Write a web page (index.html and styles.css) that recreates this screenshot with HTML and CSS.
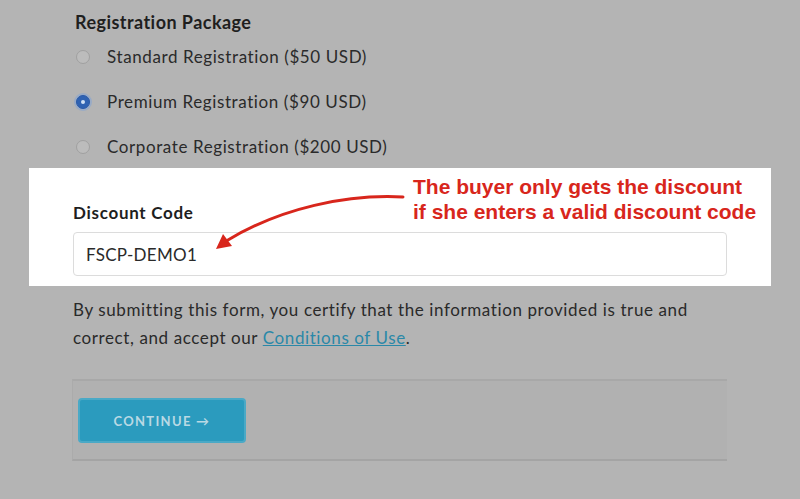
FILE: index.html
```html
<!DOCTYPE html>
<html lang="en">
<head>
<meta charset="utf-8">
<title>Registration</title>
<link rel="stylesheet" href="styles.css">
</head>
<body>
<form class="form">
  <h2 class="heading">Registration Package</h2>
  <div class="radios">
    <label class="radio-row"><span class="radio"></span><span class="radio-label">Standard Registration ($50 USD)</span></label>
    <label class="radio-row"><span class="radio checked"></span><span class="radio-label">Premium Registration ($90 USD)</span></label>
    <label class="radio-row"><span class="radio"></span><span class="radio-label">Corporate Registration ($200 USD)</span></label>
  </div>
  <div class="highlight">
    <div class="field-label">Discount Code</div>
    <div class="input">FSCP-DEMO1</div>
    <div class="note">The buyer only gets the discount<br>if she enters a valid discount code</div>
    <svg class="arrow" viewBox="0 0 742 118" width="742" height="118">
      <path d="M374 29 C 318 26 252 40 199 72" fill="none" stroke="#d8261c" stroke-width="3" stroke-linecap="round"/>
      <polygon points="187,81 203,78 194,66" fill="#d8261c"/>
    </svg>
  </div>
  <p class="terms">By submitting this form, you certify that the information provided is true and correct, and accept our <a class="link" href="#">Conditions of Use</a>.</p>
  <div class="actions">
    <button type="button" class="btn">CONTINUE &#8594;</button>
  </div>
</form>
</body>
</html>
```
FILE: styles.css
```css
html, body {
  margin: 0;
  padding: 0;
}
body {
  background: #b4b4b4;
  font-family: Lato, "Open Sans", sans-serif;
  color: #272727;
  width: 800px;
  height: 499px;
  overflow: hidden;
}
.form {
  padding-top: 12px;
}
.heading {
  margin: 0 0 0 75px;
  font-size: 18px;
  line-height: 20px;
  font-weight: 700;
  letter-spacing: 0.45px;
  color: #1f1f1f;
}
.radios {
  margin-top: 2px;
}
.radio-row {
  display: flex;
  align-items: center;
  height: 45px;
  padding-left: 76px;
  gap: 17px;
}
.radio {
  width: 14px;
  height: 14px;
  border-radius: 50%;
  border: 1px solid #a0a0a0;
  background: #bcbcbc;
  box-sizing: border-box;
  display: flex;
  align-items: center;
  justify-content: center;
}
.radio.checked {
  background: #2f62b2;
  border-color: #2a5aa8;
  box-shadow: 0 0 0 2px rgba(120, 160, 220, 0.45);
}
.radio.checked::after {
  content: "";
  width: 4px;
  height: 4px;
  border-radius: 50%;
  background: #cfe0f5;
}
.radio-label {
  font-size: 17px;
  letter-spacing: 0.6px;
  color: #2a2a2a;
}
.highlight {
  position: relative;
  margin: -1px 29px 0;
  background: #ffffff;
  padding: 35px 0 10px 44px;
}
.field-label {
  font-size: 17px;
  line-height: 20px;
  font-weight: 700;
  letter-spacing: 0.7px;
  color: #1e1e1e;
}
.input {
  margin-top: 9px;
  width: 654px;
  height: 44px;
  box-sizing: border-box;
  border: 1px solid #dcdcdc;
  border-radius: 4px;
  padding-left: 12px;
  display: flex;
  align-items: center;
  font-size: 17px;
  letter-spacing: 0.3px;
  color: #2a2a2a;
}
.note {
  position: absolute;
  left: 384px;
  top: 6px;
  font-family: "Liberation Sans", Arial, sans-serif;
  font-weight: 700;
  font-size: 21px;
  line-height: 25px;
  color: #d8261c;
  white-space: nowrap;
}
.arrow {
  position: absolute;
  left: 0;
  top: 0;
  pointer-events: none;
}
.terms {
  margin: 10px 0 0 73px;
  width: 660px;
  font-size: 17px;
  line-height: 28px;
  letter-spacing: 0.6px;
  color: #2a2a2a;
}
.link {
  color: #2a88a8;
  text-decoration: underline;
}
.actions {
  margin: 27px 0 0 72px;
  width: 655px;
  height: 82px;
  box-sizing: border-box;
  border-top: 2px solid #a8a8a8;
  border-bottom: 2px solid #a4a4a4;
  border-left: 1px solid #ababab;
  background: #b1b1b1;
  padding: 17px 0 0 5px;
}
.btn {
  width: 168px;
  height: 45px;
  border: 2px solid #4aa9c6;
  border-radius: 4px;
  background: #2b9bbe;
  color: #b9d9e4;
  font-family: Lato, sans-serif;
  font-weight: 700;
  font-size: 13px;
  letter-spacing: 1.3px;
  padding: 0;
  cursor: pointer;
}
```
